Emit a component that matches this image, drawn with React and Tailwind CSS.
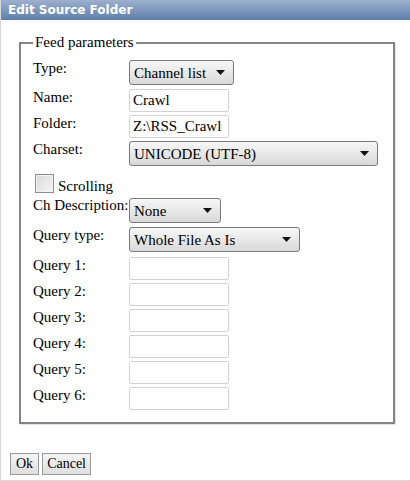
import React from "react";

function Arrow() {
  return (
    <svg width="9" height="5" viewBox="0 0 9 5" className="shrink-0">
      <path d="M0 0 H9 L4.5 5 Z" fill="#111" />
    </svg>
  );
}

function Select({ text, w }) {
  return (
    <div
      className={`${w} h-[25px] flex items-center justify-between pl-[4px] pr-[8px] border border-[#7a7a7a] rounded-[3px] bg-gradient-to-b from-[#f7f7f7] to-[#d9d9d9] text-[15px] text-black leading-none`}
    >
      <span className="pt-[2px]">{text}</span>
      <Arrow />
    </div>
  );
}

function Input({ value = "" }) {
  return (
    <div className="w-[100px] h-[23px] flex items-center px-[3px] border border-[#d3d3d3] rounded-[2px] bg-white text-[15px] text-black leading-none">
      {value}
    </div>
  );
}

function Row({ label, h, children, ctrlTop = "mt-0" }) {
  return (
    <div className={`flex items-start ${h}`}>
      <div className="w-[96px] shrink-0 text-[15px] leading-[17px] text-black">{label}</div>
      <div className={ctrlTop}>{children}</div>
    </div>
  );
}

export default function App() {
  return (
    <div className="w-[410px] h-[481px] bg-white relative border-l border-b border-[#d8d8d8] font-['Liberation_Serif','Times_New_Roman',serif]">
      <div className="h-[20px] flex items-center pl-[7px] bg-gradient-to-b from-[#9db0cd] to-[#5f7fab] text-white font-bold text-[12px] font-['DejaVu_Sans',Verdana,sans-serif]">
        Edit Source Folder
      </div>
      <fieldset className="ml-[18px] mt-[14px] w-[376px] h-[390px] border-2 border-[#858585] pl-[12px] pr-[12px] pt-[9px] shadow-[1px_1px_0_#e5e5e5]">
        <legend className="px-[2px] text-[15px] leading-[17px] text-black">Feed parameters</legend>
        <div className="flex flex-col">
          <Row label="Type:" h="h-[29px]">
            <Select text="Channel list" w="w-[105px]" />
          </Row>
          <Row label="Name:" h="h-[26px]">
            <Input value="Crawl" />
          </Row>
          <Row label="Folder:" h="h-[26px]">
            <Input value="Z:\RSS_Crawl" />
          </Row>
          <Row label="Charset:" h="h-[31px]">
            <Select text="UNICODE (UTF-8)" w="w-[249px]" />
          </Row>
          <div className="flex items-center h-[25px] pl-[2px]">
            <div className="w-[19px] h-[19px] -mt-[2px] border border-[#8e8e8e] bg-gradient-to-br from-[#d9d9d9] to-[#f6f6f6] shadow-[inset_0_0_0_1px_#f4f4f4]" />
            <span className="ml-[4px] text-[15px] leading-[17px] mt-[3px]">Scrolling</span>
          </div>
          <Row label="Ch Description:" h="h-[30px]" ctrlTop="mt-[1px]">
            <Select text="None" w="w-[92px]" />
          </Row>
          <Row label="Query type:" h="h-[30px]">
            <Select text="Whole File As Is" w="w-[171px]" />
          </Row>
          {[1, 2, 3, 4, 5, 6].map((n) => (
            <Row key={n} label={`Query ${n}:`} h="h-[26px]">
              <Input />
            </Row>
          ))}
        </div>
      </fieldset>
      <div className="flex gap-[3px] ml-[9px] mt-[29px]">
        <div className="h-[22px] px-[5px] flex items-center border border-[#9a9a9a] bg-gradient-to-b from-[#f5f5f5] to-[#dedede] text-[14px] leading-none">
          Ok
        </div>
        <div className="h-[22px] px-[4px] flex items-center border border-[#9a9a9a] bg-gradient-to-b from-[#f5f5f5] to-[#dedede] text-[14px] leading-none">
          Cancel
        </div>
      </div>
    </div>
  );
}
